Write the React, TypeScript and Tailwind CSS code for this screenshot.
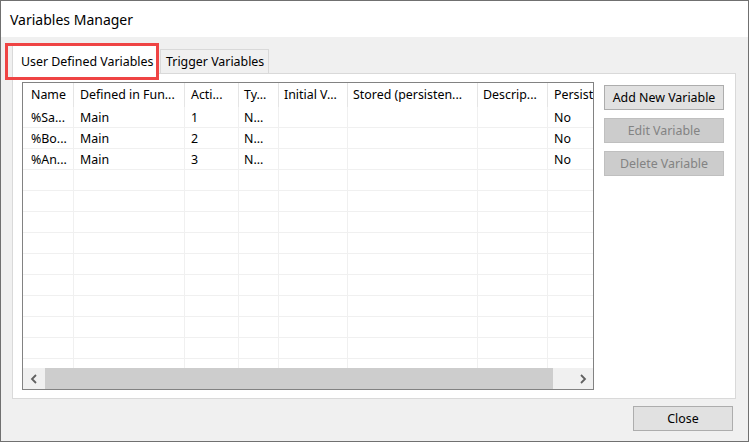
import { useState } from 'react'

const columns = [
  { title: 'Name', w: 'w-[51px] pl-[8px]' },
  { title: 'Defined in Fun...', w: 'w-[111px] pl-[6px]' },
  { title: 'Acti...', w: 'w-[54px] pl-[6px]' },
  { title: 'Ty...', w: 'w-[40px] pl-[5px]' },
  { title: 'Initial V...', w: 'w-[69px] pl-[5px]' },
  { title: 'Stored (persisten...', w: 'w-[130px] pl-[5px]' },
  { title: 'Descrip...', w: 'w-[70px] pl-[5px]' },
  { title: 'Persist', w: 'w-[80px] pl-[6px]' },
]

const rows = [
  ['%Sa...', 'Main', '1', 'N...', '', '', '', 'No'],
  ['%Bo...', 'Main', '2', 'N...', '', '', '', 'No'],
  ['%An...', 'Main', '3', 'N...', '', '', '', 'No'],
]

const emptyRows = 10

function Chevron({ dir }: { dir: 'left' | 'right' }) {
  return (
    <svg width="8" height="10" viewBox="0 0 8 10">
      <path
        d={dir === 'left' ? 'M6 1 L2 5 L6 9' : 'M2 1 L6 5 L2 9'}
        fill="none"
        stroke="#606060"
        strokeWidth="1.8"
      />
    </svg>
  )
}

function ListView() {
  return (
    <div className="w-[572px] h-[308px] border border-[#828282] bg-white flex flex-col overflow-hidden">
      {/* Header */}
      <div className="flex h-[24px] shrink-0">
        {columns.map(c => (
          <div
            key={c.title}
            className={`${c.w} shrink-0 h-full flex items-center pt-[1px] border-r border-[#e5e5e5] whitespace-nowrap overflow-hidden`}
          >
            {c.title}
          </div>
        ))}
      </div>

      {/* Rows */}
      <div className="flex-1 overflow-hidden">
        {rows.map((r, i) => (
          <div key={i} className="flex h-[21px] border-b border-[#f0f0f0]">
            {columns.map((c, j) => (
              <div
                key={j}
                className={`${c.w} shrink-0 h-full flex items-center pt-[2px] border-r border-[#f0f0f0] whitespace-nowrap overflow-hidden`}
              >
                {r[j]}
              </div>
            ))}
          </div>
        ))}
        {Array.from({ length: emptyRows }).map((_, i) => (
          <div key={i} className="flex h-[21px] border-b border-[#f0f0f0]">
            {columns.map((c, j) => (
              <div key={j} className={`${c.w} shrink-0 h-full border-r border-[#f0f0f0]`} />
            ))}
          </div>
        ))}
        <div className="flex h-[21px]">
          {columns.map((c, j) => (
            <div key={j} className={`${c.w} shrink-0 h-full border-r border-[#f0f0f0]`} />
          ))}
        </div>
      </div>

      {/* Horizontal scrollbar */}
      <div className="h-[21px] shrink-0 flex bg-[#f0f0f0]">
        <div className="w-[21px] h-full flex items-center justify-center">
          <Chevron dir="left" />
        </div>
        <div className="flex-1 flex pl-[1px] pr-[19px]">
          <div className="w-[508px] h-full bg-[#cdcdcd]" />
        </div>
        <div className="w-[21px] h-full flex items-center justify-center">
          <Chevron dir="right" />
        </div>
      </div>
    </div>
  )
}

export default function App() {
  const [tab, setTab] = useState(0)

  return (
    <div className="w-[749px] h-[442px] border border-[#707070] bg-[#f0f0f0] flex flex-col text-[12.4px] text-black font-['Noto_Sans','DejaVu_Sans',sans-serif]">
      {/* Title bar */}
      <div className="h-[36px] shrink-0 bg-white flex items-center pl-[9px] text-[14px]">
        Variables Manager
      </div>

      <div className="flex-1 relative flex flex-col">
        {/* Tabs */}
        <div className="flex items-end h-[28px] mt-[8px] ml-[11px]">
          <button
            onClick={() => setTab(0)}
            className="relative z-10 -mb-px w-[147px] h-[29px] bg-white border-t border-l border-r border-[#d9d9d9] flex items-center pl-[8px] pt-[4px]"
          >
            User Defined Variables
          </button>
          <button
            onClick={() => setTab(1)}
            className="ml-[1px] w-[109px] h-[24px] bg-[#f0f0f0] border-t border-l border-r border-[#d9d9d9] flex items-center pl-[5px] pt-[2px]"
          >
            Trigger Variables
          </button>
        </div>

        {/* Annotation highlight */}
        <div className="absolute left-[4px] top-[6px] w-[154px] h-[37px] border-[3px] border-[#ef4444] pointer-events-none z-20" />

        {/* Tab panel */}
        <div className="ml-[11px] mr-[12px] h-[326px] bg-white border border-[#d9d9d9] flex pt-[8px] pl-[9px]">
          {tab === 0 && (
            <>
              <ListView />
              <div className="ml-[10px] flex flex-col gap-[8px] pt-[3px]">
                <button className="w-[120px] h-[25px] pt-[2px] bg-[#e1e1e1] border border-[#adadad] text-black">
                  Add New Variable
                </button>
                <button className="w-[120px] h-[25px] pt-[2px] bg-[#cccccc] border border-[#bfbfbf] text-[#838383]">
                  Edit Variable
                </button>
                <button className="w-[120px] h-[25px] pt-[2px] bg-[#cccccc] border border-[#bfbfbf] text-[#838383]">
                  Delete Variable
                </button>
              </div>
            </>
          )}
        </div>

        {/* Footer */}
        <div className="flex justify-end mt-[7px] mr-[15px]">
          <button className="w-[100px] h-[25px] pt-[2px] bg-[#e1e1e1] border border-[#adadad]">Close</button>
        </div>
      </div>
    </div>
  )
}
